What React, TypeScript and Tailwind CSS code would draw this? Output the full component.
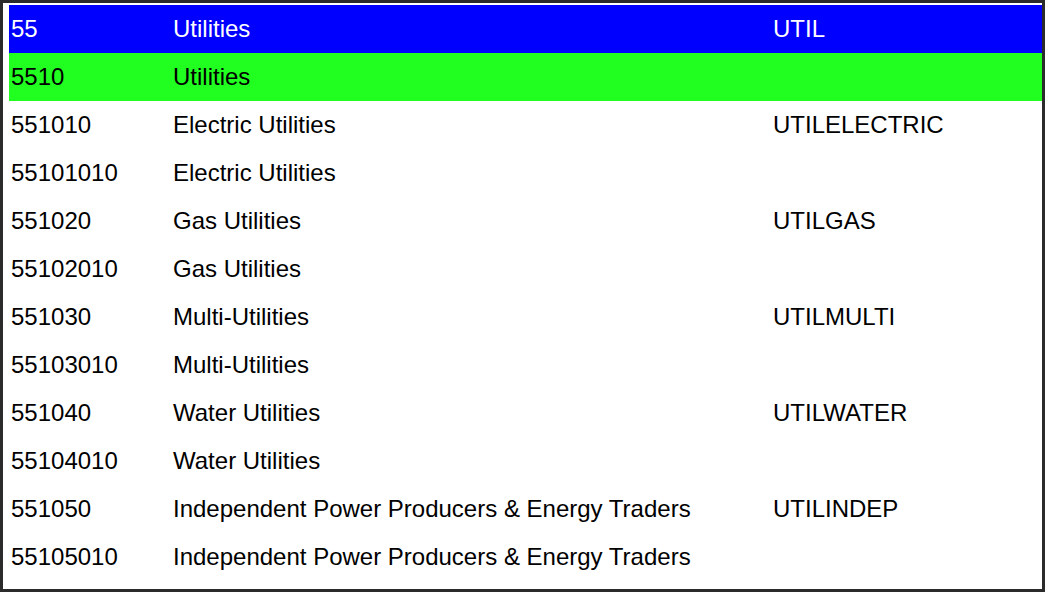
const rows: { code: string; name: string; key: string; bg?: string; fg?: string }[] = [
  { code: '55', name: 'Utilities', key: 'UTIL', bg: 'bg-[#0000ff]', fg: 'text-white' },
  { code: '5510', name: 'Utilities', key: '', bg: 'bg-[#21ff21]' },
  { code: '551010', name: 'Electric Utilities', key: 'UTILELECTRIC' },
  { code: '55101010', name: 'Electric Utilities', key: '' },
  { code: '551020', name: 'Gas Utilities', key: 'UTILGAS' },
  { code: '55102010', name: 'Gas Utilities', key: '' },
  { code: '551030', name: 'Multi-Utilities', key: 'UTILMULTI' },
  { code: '55103010', name: 'Multi-Utilities', key: '' },
  { code: '551040', name: 'Water Utilities', key: 'UTILWATER' },
  { code: '55104010', name: 'Water Utilities', key: '' },
  { code: '551050', name: 'Independent Power Producers & Energy Traders', key: 'UTILINDEP' },
  { code: '55105010', name: 'Independent Power Producers & Energy Traders', key: '' },
];

export default function App() {
  return (
    <div className="w-[1045px] h-[592px] bg-white border-[3px] border-[#2b2b2b] pt-[2px] pl-[6px] overflow-hidden font-['Liberation_Sans',Arial,sans-serif] text-[24px] text-black">
      {rows.map((r, i) => (
        <div key={i} className={`flex h-[48px] items-center ${r.bg ?? ''} ${r.fg ?? ''}`}>
          <div className="w-[164px] pl-[2px]">{r.code}</div>
          <div className="w-[600px]">{r.name}</div>
          <div>{r.key}</div>
        </div>
      ))}
    </div>
  );
}
